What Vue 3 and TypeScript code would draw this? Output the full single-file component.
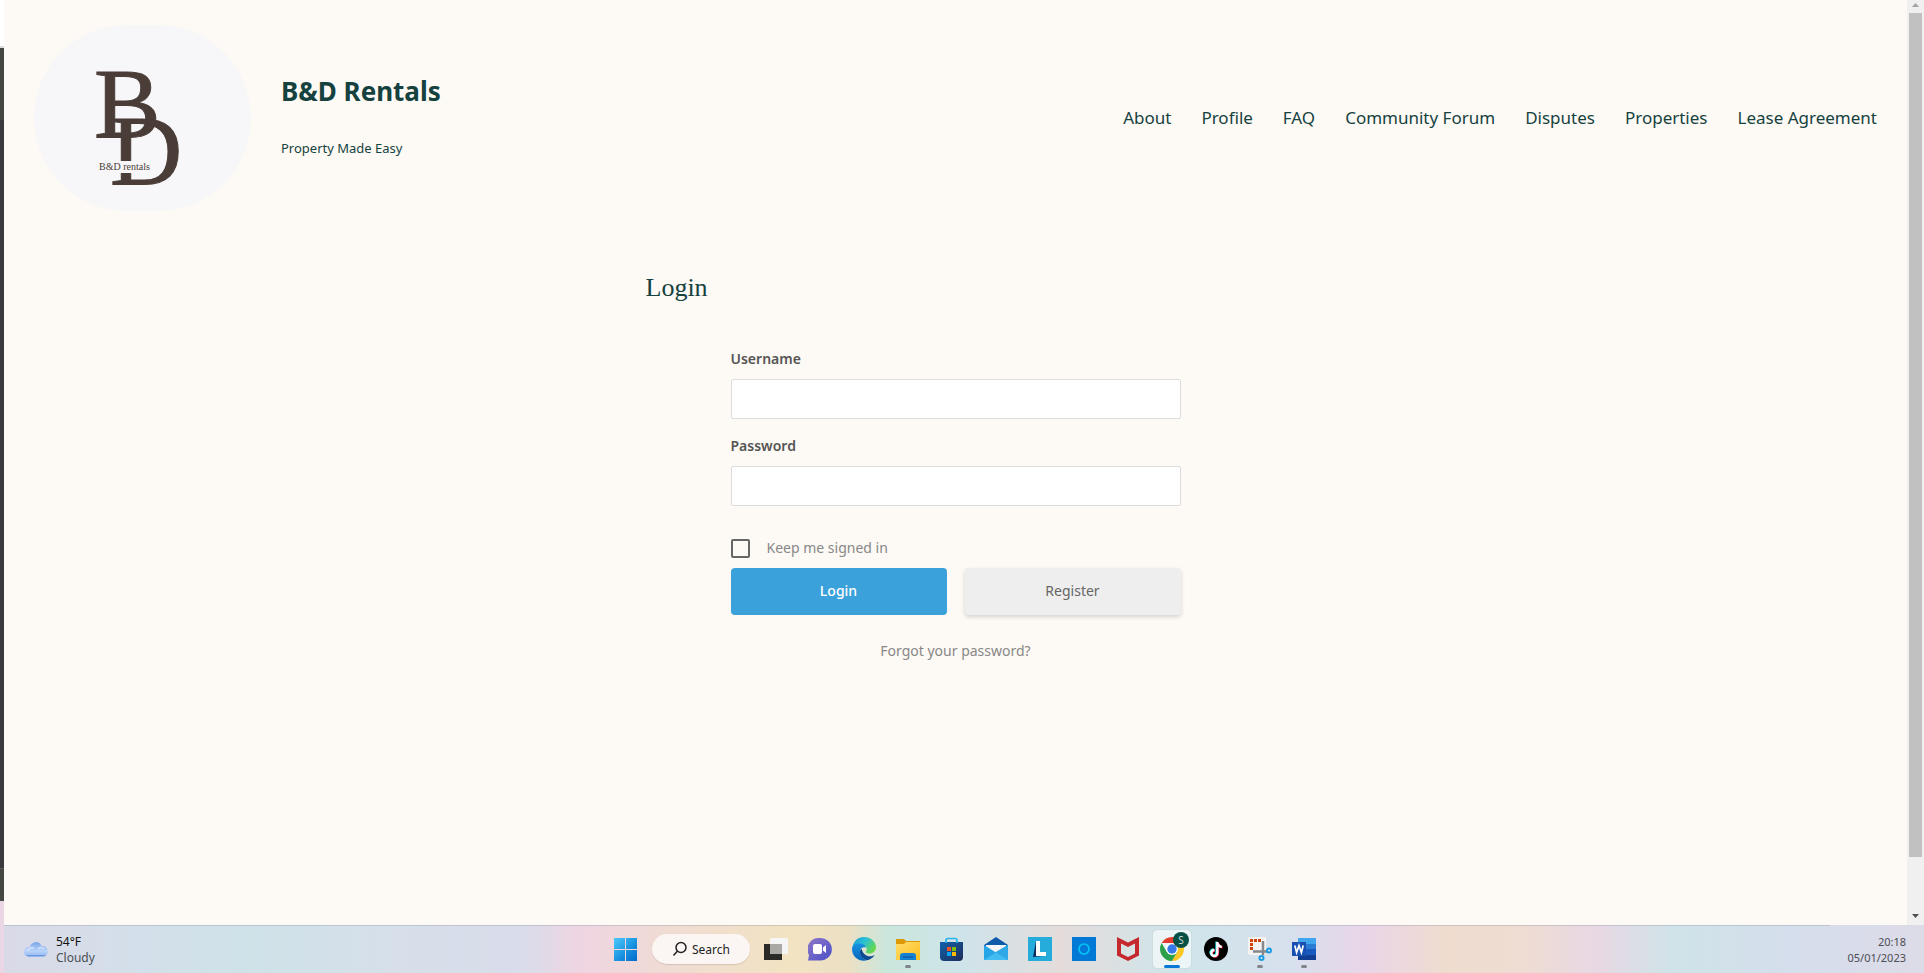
<script setup lang="ts">
import { ref } from 'vue'

interface TaskItem {
  id: string
  label: string
  state?: 'open' | 'active'
}

const links: string[] = ['About', 'Profile', 'FAQ', 'Community Forum', 'Disputes', 'Properties', 'Lease Agreement']

const tasks: TaskItem[] = [
  { id: 'view', label: 'Task view' },
  { id: 'chat', label: 'Chat' },
  { id: 'edge', label: 'Edge' },
  { id: 'files', label: 'File Explorer', state: 'open' },
  { id: 'store', label: 'Store' },
  { id: 'mail', label: 'Mail' },
  { id: 'ell', label: 'L' },
  { id: 'ring', label: 'Cortana' },
  { id: 'shield', label: 'McAfee' },
  { id: 'chrome', label: 'Chrome', state: 'active' },
  { id: 'tiktok', label: 'TikTok' },
  { id: 'snip', label: 'Snipping Tool', state: 'open' },
  { id: 'word', label: 'Word', state: 'open' },
]

const username = ref('')
const password = ref('')
const keep = ref(false)
</script>

<template>
  <div class="desktop">
    <div class="edge"><i class="e1"></i><i class="e2"></i><i class="e3"></i><i class="e4"></i></div>

    <div class="page">
      <header class="header">
        <a class="logo" href="#" aria-label="B&D rentals">
          <svg width="217" height="186" viewBox="0 0 217 186">
            <g class="mono">
              <text x="60" y="112" font-size="100">B</text>
              <text x="76" y="159" font-size="100">D</text>
            </g>
            <rect x="60" y="136" width="56" height="12" fill="#f7f7f9" />
            <text class="tiny" x="65" y="145" font-size="10">B&amp;D rentals</text>
          </svg>
        </a>
        <div class="brand">
          <h1>B&amp;D Rentals</h1>
          <p>Property Made Easy</p>
        </div>
        <nav class="nav">
          <a v-for="l in links" :key="l" href="#">{{ l }}</a>
        </nav>
      </header>

      <main class="main">
        <h2>Login</h2>
        <form class="form" @submit.prevent>
          <label class="name" for="user">Username</label>
          <input id="user" v-model="username" class="field" type="text" />
          <label class="name" for="pass">Password</label>
          <input id="pass" v-model="password" class="field" type="password" />
          <label class="keep"><input v-model="keep" type="checkbox" />Keep me signed in</label>
          <div class="buttons">
            <button class="primary" type="submit">Login</button>
            <button class="secondary" type="button">Register</button>
          </div>
          <a class="forgot" href="#">Forgot your password?</a>
        </form>
      </main>
    </div>

    <div class="scrollbar">
      <svg class="up" width="17" height="13" viewBox="0 0 17 13"><path d="M5 7 8.500 3 12 7z" fill="#a3a3a3" /></svg>
      <div class="track"><div class="thumb"></div></div>
      <svg width="17" height="17" viewBox="0 0 17 17"><path d="M5 6h7l-3.500 4z" fill="#505050" /></svg>
    </div>

    <footer class="taskbar">
      <div class="weather">
        <svg width="24" height="24" viewBox="0 0 24 24">
          <defs>
            <linearGradient id="cl" x1="0" y1="0" x2="0" y2="1"><stop offset="0" stop-color="#7aa5e8" /><stop offset=".6" stop-color="#b9d3fa" /><stop offset="1" stop-color="#8fb4f0" /></linearGradient>
          </defs>
          <path d="M5 19a5 5 0 0 1 0-10h1a6 6 0 0 1 11.500-1A5.500 5.500 0 0 1 19 19z" fill="url(#cl)" />
          <path d="M3 13q2-4 7-3M14 11q3-3 6 0" fill="none" stroke="#d8e7ff" stroke-width="2" opacity=".7" />
          <path d="M3 17.500h18" stroke="#6f97dd" />
        </svg>
        <div><div class="temp">54°F</div><div>Cloudy</div></div>
      </div>

      <div class="apps">
        <button class="task" aria-label="Start">
          <svg width="24" height="24" viewBox="1 0 24 24">
            <defs><linearGradient id="wn" x1="0" y1="0" x2="1" y2="1"><stop offset="0" stop-color="#4cc9fb" /><stop offset=".55" stop-color="#1a93e0" /><stop offset="1" stop-color="#0269cc" /></linearGradient></defs>
            <path d="M1 1h11v11H1zM13 1h11v11H13zM1 13h11v11H1zM13 13h11v11H13z" fill="url(#wn)" />
          </svg>
        </button>
        <button class="search">
          <svg width="16" height="16" viewBox="0 0 16 16" fill="none" stroke="#222" stroke-width="1.500"><circle cx="9" cy="6.500" r="5" /><path d="M5.500 10 1.500 14.500" /></svg>
          Search
        </button>
        <button v-for="t in tasks" :key="t.id" class="task" :class="t.state" :aria-label="t.label">
          <svg v-if="t.id === 'view'" width="24" height="24" viewBox="0 0 24 24">
            <rect y="7" width="18" height="16" fill="#2a2a28" /><rect x="6" y="1" width="18" height="16" fill="#f5f5f5" /><path d="M6 7h12v10H6z" fill="#aaa9a5" />
          </svg>
          <svg v-else-if="t.id === 'chat'" width="24" height="24" viewBox="1 0 24 24">
            <defs><linearGradient id="ch" x1="0" y1="0" x2="1" y2="1"><stop offset="0" stop-color="#8f78c8" /><stop offset="1" stop-color="#4a50c8" /></linearGradient></defs>
            <path d="M12.500 1a11.300 11.300 0 1 1 0 22.500H1l1-5.500A11.300 11.300 0 0 1 12.500 1z" fill="url(#ch)" />
            <rect x="6" y="7" width="9" height="10" rx="2" fill="#fff" /><path d="M16 10.500l3-2.500v8l-3-2.500z" fill="#fff" />
          </svg>
          <svg v-else-if="t.id === 'edge'" width="24" height="24" viewBox="0 0 24 24">
            <defs>
              <linearGradient id="ed" x1="0" y1="0" x2="1" y2=".6"><stop offset="0" stop-color="#1797d8" /><stop offset=".5" stop-color="#2bc1d4" /><stop offset="1" stop-color="#66d94a" /></linearGradient>
              <linearGradient id="eb" x1="0" y1="0" x2="0" y2="1"><stop offset="0" stop-color="#1592e0" /><stop offset="1" stop-color="#0a66bd" /></linearGradient>
            </defs>
            <path d="M.500 10C1.500 4 6 0 12 0c7 0 12 5 12 10 0 4-3 6.500-6.500 6.500-3 0-4.500-1-3-3 .800-1.500 0-4-2.500-5-4-1.500-9-.500-11.500 1.500z" fill="url(#ed)" />
            <path d="M0 12c0-4 4-6 8-5.500 3.500.300 5.500 2 6 4-5-1-6.500 2.500-6 5.500.600 4 4 6.500 7.500 7.300C7.500 25.500 0 20 0 12z" fill="url(#eb)" />
            <path d="M9.500 11.500c-2.500 2-2 6.500 1 9.500 2 1.800 4.500 2.500 6.500 1.700 2.500-1 4.500-2.700 5.600-4.700-4 2.500-11 2-13.100-6.500z" fill="#0e4a94" />
          </svg>
          <svg v-else-if="t.id === 'files'" width="24" height="24" viewBox="0 0 24 24">
            <defs><linearGradient id="fo" x1="0" y1="0" x2="1" y2="1"><stop offset="0" stop-color="#ffdc6b" /><stop offset="1" stop-color="#fdbf20" /></linearGradient></defs>
            <path d="M0 2h8l2 2h14v5H0z" fill="#dc9a08" /><path d="M0 7h8l2-2h14v18H0z" fill="url(#fo)" />
            <path d="M4 23v-4q0-3 3-3h10q3 0 3 3v4z" fill="#1680d2" /><path d="M7 20h10" stroke="#0c4f94" />
          </svg>
          <svg v-else-if="t.id === 'store'" width="24" height="24" viewBox="0 0 24 24">
            <defs><linearGradient id="st" x1="0" y1="0" x2="1" y2="1"><stop offset="0" stop-color="#1262ac" /><stop offset="1" stop-color="#1e2b58" /></linearGradient></defs>
            <path d="M0 5h23v15q0 4-4 4H4q-4 0-4-4z" fill="url(#st)" /><path d="M6 6V3.500q0-2 2-2h7q2 0 2 2V6" fill="none" stroke="#28b4ef" stroke-width="1.700" />
            <path d="M7 10h4v4H7z" fill="#f35325" /><path d="M12 10h4v4h-4z" fill="#81bc06" /><path d="M7 15h4v4H7z" fill="#05a6f0" /><path d="M12 15h4v4h-4z" fill="#ffba08" />
          </svg>
          <svg v-else-if="t.id === 'mail'" width="24" height="24" viewBox="0 0 24 24">
            <path d="M0 8 12 0l12 8v3H0z" fill="#0f5aa8" /><path d="M2 8h20v9H2z" fill="#f4f6f9" /><path d="M0 8l12 7.500L24 8v15H0z" fill="#27a5e6" /><path d="M0 23 24 8v15z" fill="#43bcf2" /><path d="M11 15l13 8V8z" fill="#1b93db" opacity=".5" />
          </svg>
          <svg v-else-if="t.id === 'ell'" width="24" height="24" viewBox="0 0 24 24">
            <path d="M0 0h24v24H0z" fill="#25acdb" /><path d="M8 4 5 20l10-1-6-2z" fill="#0b2a5c" /><path d="M8 4h4v11h6v4H8z" fill="#fff" />
          </svg>
          <svg v-else-if="t.id === 'ring'" width="24" height="24" viewBox="0 0 24 24">
            <path d="M0 0h24v24H0z" fill="#0278d7" /><circle cx="12" cy="12" r="5" fill="none" stroke="#06c4f5" stroke-width="1.700" />
          </svg>
          <svg v-else-if="t.id === 'shield'" width="24" height="24" viewBox="0 0 24 24">
            <path d="M1 0l11 5.500L23 0v18.500L12 24 1 18.500zM5 6.500v10l7 3.500 7-3.500v-10L12 10z" fill="#c5292e" fill-rule="evenodd" />
          </svg>
          <svg v-else-if="t.id === 'chrome'" class="wide" width="30" height="30" viewBox="0 0 30 30">
            <path d="M5.610 12A12 12 0 0 1 26.390 12H16z" fill="#e33b2e" />
            <path d="M26.390 12A12 12 0 0 1 16 30l5.200-9-5.200-9z" fill="#fcc624" />
            <path d="M5.610 12A12 12 0 0 0 16 30l5.200-9H10.800z" fill="#2c9f49" />
            <path d="M16 12h10.400L21.200 21z" fill="#fcc624" />
            <circle cx="16" cy="18" r="6" fill="#fff" /><circle cx="16" cy="18" r="4.700" fill="#3579e8" />
          </svg>
          <svg v-else-if="t.id === 'tiktok'" width="24" height="24" viewBox="0 0 24 24">
            <circle cx="12" cy="12" r="12" fill="#000" />
            <g fill="none" stroke-width="2.300"><path d="M12.500 4.500v11a3 3 0 1 1-3-3M12.500 5q.500 4 4.500 4.300" stroke="#25f4ee" /><path d="M14 5.500v11a3 3 0 1 1-3-3M14 6q.500 4 4.500 4.300" stroke="#fe2c55" /><path d="M13.300 5v11a3 3 0 1 1-3-3M13.300 5.500q.500 4 4.500 4.300" stroke="#fff" /></g>
          </svg>
          <svg v-else-if="t.id === 'snip'" width="24" height="24" viewBox="0 0 24 24">
            <rect width="18" height="18" rx="2" fill="#f4f3f2" /><path d="M3.500 13V3.500H14" fill="none" stroke="#d2420b" stroke-width="3" stroke-dasharray="3 1" />
            <path d="M15 4v14M5 14.500h14" stroke="#85888c" stroke-width="2.500" />
            <g fill="#d8eefa" stroke="#1b9ce2" stroke-width="2"><circle cx="21" cy="13.500" r="2" /><circle cx="13.500" cy="21" r="2" /></g>
          </svg>
          <svg v-else width="24" height="24" viewBox="0 0 24 24">
            <path d="M6 1h18v6H6z" fill="#41a5ee" /><path d="M6 7h18v5H6z" fill="#2b7cd3" /><path d="M6 12h18v6H6z" fill="#185abd" /><path d="M6 18h18v5H6z" fill="#103f91" />
            <path d="M0 5h14v14H0z" fill="#1951b2" /><path d="M2.800 8.500l1.800 7 2.400-7 2.400 7 1.800-7" fill="none" stroke="#fff" stroke-width="1.700" />
          </svg>
          <span v-if="t.id === 'chrome'" class="badge">S</span>
        </button>
      </div>

      <div class="clock"><div>20:18</div><div>05/01/2023</div></div>
    </footer>
  </div>
</template>

<style>
body { margin: 0; }
</style>

<style scoped>
.desktop {
  display: grid;
  grid-template: 1fr 48px / 4px 1fr 17px;
  min-height: 100vh;
  font-family: "Noto Sans", "Open Sans", sans-serif;
  color: #15423f;
}
h1, h2, p { margin: 0; }
a { color: inherit; text-decoration: none; }
button { font-family: inherit; border: 0; padding: 0; }

.edge { grid-row: 1 / 3; display: flex; flex-direction: column; background: #ead6e4; }
.e1 { height: 46px; background: #fff; border-bottom: 2px solid #dcdcdc; }
.e2 { height: 72px; background: #454743; }
.e3 { flex: 1; background: #3a393b; border-bottom: 1px solid #5a5a5a; }
.e4 { height: 32px; margin-bottom: 72px; background: #454743; }

.page { background: #fdf9f4; }
.header { display: flex; align-items: center; gap: 30px; padding: 25px 30px; }
.logo { display: block; height: 186px; border-radius: 100px; background: #f7f7f9; overflow: hidden; }
.mono { font-family: "Liberation Serif", serif; fill: #4a3d38; stroke: #4a3d38; }
.tiny { font-family: "Liberation Serif", serif; fill: #4a3d38; }
.brand { display: flex; flex-direction: column; gap: 32px; padding-bottom: 2px; }
h1 { font-size: 26px; line-height: 30px; font-weight: 700; }
.brand p { font-size: 13px; line-height: 20px; }
.nav { display: flex; flex-wrap: wrap; gap: 30px; margin-left: auto; font-size: 17px; line-height: 24px; }

.main { max-width: 620px; margin: 32px auto 0; }
h2 { font: 400 26px/40px "Liberation Serif", serif; margin-bottom: 41px; }
.form { display: flex; flex-direction: column; max-width: 450px; margin: 0 auto; font-size: 14px; line-height: 20px; color: #888; }
.name { font-weight: 600; color: #555; margin-bottom: 10px; }
.field { box-sizing: border-box; width: 100%; height: 40px; border: 1px solid #ddd; border-radius: 2px; background: #fff; margin: 0 0 17px; padding: 0 12px; font: inherit; color: #666; }
.keep { display: flex; align-items: center; gap: 17px; margin: 15px 0 10px; }
.keep input { appearance: none; box-sizing: border-box; width: 19px; height: 19px; margin: 0; border: 2px solid #666; border-radius: 2px; }
.keep input:checked { background: #3ba1da; }
.buttons { display: grid; grid-template-columns: 1fr 1fr; gap: 18px; }
.buttons button { height: 47px; border-radius: 4px; font-size: 14px; padding-bottom: 2px; }
.primary { background: #3ba1da; color: #fff; font-weight: 500; }
.secondary { background: #eee; color: #666; box-shadow: 0 2px 4px rgba(0, 0, 0, .16); }
.forgot { align-self: center; margin-top: 26px; }

.scrollbar { display: flex; flex-direction: column; background: #f0f0f0; }
.track { flex: 1; display: grid; grid-template-rows: 844fr 51fr; padding: 0 2px; }
.thumb { background: #c1c1c1; }

.taskbar {
  position: relative;
  grid-column: 2 / 4;
  display: grid;
  grid-template-columns: 1fr auto 1fr;
  align-items: center;
  padding: 0 18px 0 20px;
  font-size: 12px;
  line-height: 16px;
  color: #4b4e54;
  background: linear-gradient(90deg, #dadae7 0%, #d3dfea 7%, #cfe2e8 13%, #d6dfea 20%, #d9dcea 27%, #efd5e2 30%, #f0dcd2 35%, #f2e3c2 41%, #ece0c4 44%, #cae6dc 46%, #cfe4ea 50%, #e4dcdb 55%, #cfe5ea 61%, #d7e0ed 67%, #ead5e8 71%, #efdccf 75%, #efdcd2 79%, #e8d8e4 83%, #cfe3e8 87%, #d5deec 93%, #dddbe8 100%);
}
.taskbar::before { content: ""; position: absolute; left: 0; right: 94px; top: 0; height: 1px; background: rgba(100, 120, 140, .25); }
.weather { display: flex; align-items: center; gap: 8px; padding-top: 2px; }
.temp { color: #111; }
.apps { display: flex; align-items: center; }
.task { position: relative; width: 44px; height: 48px; display: flex; align-items: center; justify-content: center; background: none; }
.task svg { position: relative; }
.open::after, .active::after { content: ""; position: absolute; bottom: 5px; width: 6px; height: 3px; border-radius: 2px; background: #80868b; }
.active::after { width: 16px; background: #0878d4; }
.active::before { content: ""; position: absolute; inset: 5px 3px; border-radius: 4px; background: rgba(255, 255, 255, .6); box-shadow: 0 0 1px rgba(0, 0, 0, .3); }
.task .wide { margin: -6px 0 0 -2px; }
.badge { position: absolute; top: 7px; right: 5px; width: 16px; height: 16px; border-radius: 8px; background: #075045; color: #c9dcd8; font-size: 10px; line-height: 16px; text-align: center; }
.search { display: flex; align-items: center; justify-content: center; gap: 4px; width: 98px; height: 30px; margin: 0 4px; border-radius: 15px; background: #fbf6f3; color: #222; font-size: 12px; box-shadow: 0 1px 1px rgba(0, 0, 0, .12); }
.clock { text-align: right; font-size: 11px; padding-top: 1px; }
</style>
